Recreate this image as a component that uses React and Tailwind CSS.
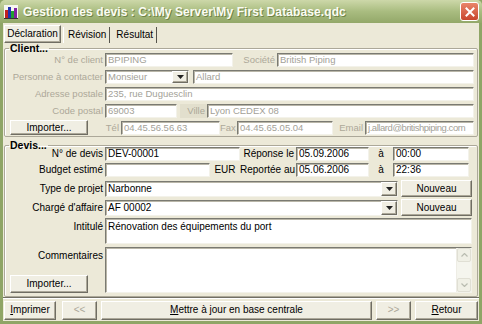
import React from "react";

const sunk =
  "bg-white border border-t-[#7a7a72] border-l-[#7a7a72] border-b-[#f3f2ea] border-r-[#f3f2ea] shadow-[inset_1px_1px_0_#b9b6a8]";
const raised =
  "bg-[#f0eee3] border border-t-white border-l-white border-b-[#6f6d63] border-r-[#6f6d63] shadow-[inset_-1px_-1px_0_#aca899]";

function AppIcon() {
  return (
    <svg width="14" height="14" viewBox="0 0 14 14" className="shrink-0">
      <rect x="0" y="0" width="14" height="14" fill="#f6f6f0" />
      <rect x="1" y="5" width="3" height="8" fill="#c02020" />
      <rect x="4" y="2" width="3" height="11" fill="#2030b0" />
      <rect x="7" y="6" width="3" height="7" fill="#20a030" />
      <rect x="10" y="3" width="3" height="10" fill="#8020a0" />
      <rect x="0" y="13" width="14" height="1" fill="#333" />
    </svg>
  );
}

function ArrowBtn() {
  return (
    <div className={`${raised} w-[16px] h-full flex items-center justify-center shrink-0`}>
      <svg width="7" height="4" viewBox="0 0 7 4">
        <path d="M0 0 H7 L3.5 4 Z" fill="#222" />
      </svg>
    </div>
  );
}

function Input({ w, value, dim, grow, h = "h-[14px]", tight }) {
  return (
    <div
      className={`${sunk} ${h} ${grow ? "flex-1 min-w-0" : "shrink-0"} flex items-center pl-[2px] overflow-hidden whitespace-nowrap leading-none ${
        dim ? "text-[#a3a198] text-[9.5px]" : "text-black text-[10px]"
      } ${tight ? "tracking-[-0.45px]" : ""}`}
      style={w ? { width: w } : undefined}
    >
      {value}
    </div>
  );
}

function Select({ w, value, dim, grow, h = "h-[14px]" }) {
  return (
    <div
      className={`${sunk} ${h} ${grow ? "flex-1 min-w-0" : "shrink-0"} flex items-stretch overflow-hidden whitespace-nowrap leading-none ${
        dim ? "text-[#a3a198] text-[9.5px]" : "text-black text-[10px]"
      }`}
      style={w ? { width: w } : undefined}
    >
      <div className="flex-1 flex items-center pl-[2px]">{value}</div>
      <ArrowBtn />
    </div>
  );
}

function CLabel({ w, children, center }) {
  return (
    <div
      className={`shrink-0 ${center ? "text-center" : "text-right pr-[2px]"} text-[9.5px] text-[#aca899] whitespace-nowrap leading-none`}
      style={{ width: w }}
    >
      {children}
    </div>
  );
}

function DLabel({ w, children, center }) {
  return (
    <div
      className={`shrink-0 ${center ? "text-center" : "text-right pr-[2px]"} text-[10px] text-black whitespace-nowrap leading-none`}
      style={{ width: w }}
    >
      {children}
    </div>
  );
}

function Button({ w, children, disabled, grow, className = "" }) {
  return (
    <div
      className={`${raised} ${grow ? "flex-1 min-w-0" : "shrink-0"} flex items-center justify-center text-[10px] leading-none ${
        disabled ? "text-[#aca899]" : "text-black"
      } ${className}`}
      style={w ? { width: w } : undefined}
    >
      {children}
    </div>
  );
}

export default function App() {
  return (
    <div
      className="w-[482px] h-[324px] flex flex-col overflow-hidden bg-[#8fa566]"
      style={{ fontFamily: '"Liberation Sans", Arial, sans-serif' }}
    >
      {/* title bar */}
      <div className="h-[23px] shrink-0 flex items-center pl-[4px] pr-[3px] bg-gradient-to-b from-[#cdd8a9] via-[#a9bc80] to-[#93a869] rounded-t-[5px]">
        <AppIcon />
        <span className="ml-[5px] text-[12px] font-bold text-[#fbfcf3] tracking-[0.1px] [text-shadow:1px_1px_0_#6f8347] whitespace-nowrap">
          {"Gestion des devis : C:\\My Server\\My First Database.qdc"}
        </span>
        <div className="ml-auto w-[19px] h-[19px] rounded-[3px] border border-white bg-gradient-to-b from-[#e9856a] to-[#c8452c] flex items-center justify-center">
          <svg width="10" height="10" viewBox="0 0 10 10">
            <path d="M1.5 1.5 L8.5 8.5 M8.5 1.5 L1.5 8.5" stroke="white" strokeWidth="2" strokeLinecap="square" />
          </svg>
        </div>
      </div>

      {/* body */}
      <div className="flex-1 mx-[3px] mb-[4px] bg-[#ece9d8] flex flex-col">
        {/* tabs */}
        <div className="h-[20px] shrink-0 flex items-end pl-[1px] text-[10px] leading-none">
          <div className={`${raised} h-[18px] w-[57px] flex items-center justify-center`}>Déclaration</div>
          <div className="h-[16px] ml-[2px] pl-[4px] pr-[3px] flex items-center border-l border-r border-l-white border-r-[#55544c]">Révision</div>
          <div className="h-[16px] ml-[2px] pl-[4px] pr-[3px] flex items-center border-r border-r-[#55544c]">Résultat</div>
        </div>

        {/* client */}
        <fieldset className="mx-[1px] border border-[#aca899] shadow-[inset_1px_1px_0_#fff] rounded-[2px] pb-[1px] pr-[3px] min-w-0">
          <legend className="ml-[4px] px-[1px] text-[10.5px] font-bold leading-[11px]">Client...</legend>
          <div className="flex items-center h-[14px] mt-[-1px]">
            <CLabel w={100}>N° de client</CLabel>
            <Input w={128} value="BPIPING" dim />
            <CLabel w={44}>Société</CLabel>
            <Input grow value="British Piping" dim />
          </div>
          <div className="flex items-center h-[14px] mt-[3px]">
            <CLabel w={100}>Personne à contacter</CLabel>
            <Select w={84} value="Monsieur" dim />
            <div className="w-[4px]" />
            <Input grow value="Allard" dim />
          </div>
          <div className="flex items-center h-[14px] mt-[3px]">
            <CLabel w={100}>Adresse postale</CLabel>
            <Input grow value="235, rue Duguesclin" dim />
          </div>
          <div className="flex items-center h-[14px] mt-[3px]">
            <CLabel w={100}>Code postal</CLabel>
            <Input w={72} value="69003" dim />
            <div className="ml-[3px] w-[27px] h-[14px] bg-[#e2dfcd] flex items-center justify-end pr-[2px] text-[9.5px] text-[#aca899] leading-none">Ville</div>
            <Input grow value="Lyon CEDEX 08" dim />
          </div>
          <div className="flex items-center h-[15px] mt-[2px]">
            <Button w={78} className="ml-[5px] h-[15px]">Importer...</Button>
            <CLabel w={33}>Tél</CLabel>
            <Input w={99} value="04.45.56.56.63" dim />
            <CLabel w={17}>Fax</CLabel>
            <Input w={96} value="04.45.65.05.04" dim />
            <CLabel w={32}>Email</CLabel>
            <Input grow value="j.allard@britishpiping.com" dim tight />
          </div>
        </fieldset>

        {/* devis */}
        <fieldset className="mx-[1px] mt-[3px] border border-[#aca899] shadow-[inset_1px_1px_0_#fff] rounded-[2px] pb-[3px] pr-[5px] min-w-0">
          <legend className="ml-[4px] px-[1px] text-[10.5px] font-bold leading-[11px]">Devis...</legend>
          <div className="flex items-center h-[14px] mt-[-4px]">
            <DLabel w={100}>N° de devis</DLabel>
            <Input w={135} value="DEV-00001" />
            <DLabel w={56}>Réponse le</DLabel>
            <Input w={73} value="05.09.2006" />
            <DLabel w={24} center>à</DLabel>
            <Input w={76} value="00:00" />
          </div>
          <div className="flex items-center h-[14px] mt-[2px]">
            <DLabel w={100}>Budget estimé</DLabel>
            <Input w={105} value="" />
            <DLabel w={30} center>EUR</DLabel>
            <DLabel w={56}>Reportée au</DLabel>
            <Input w={73} value="05.06.2006" />
            <DLabel w={24} center>à</DLabel>
            <Input w={76} value="22:36" />
          </div>
          <div className="flex items-center h-[17px] mt-[3px]">
            <DLabel w={100}>Type de projet</DLabel>
            <Select grow h="h-[16px]" value="Narbonne" />
            <Button w={71} className="ml-[3px] h-[17px]">Nouveau</Button>
          </div>
          <div className="flex items-center h-[17px] mt-[2px]">
            <DLabel w={100}>Chargé d'affaire</DLabel>
            <Select grow h="h-[16px]" value="AF 00002" />
            <Button w={71} className="ml-[3px] h-[17px]">Nouveau</Button>
          </div>
          <div className="flex items-start h-[26px] mt-[2px]">
            <DLabel w={100}>
              <div className="pt-[4px]">Intitulé</div>
            </DLabel>
            <div className={`${sunk} flex-1 h-[26px] pl-[2px] pt-[3px] text-[10px] leading-none`}>
              Rénovation des équipements du port
            </div>
          </div>
          <div className="flex items-stretch h-[46px] mt-[3px]">
            <div className="w-[100px] shrink-0 flex flex-col">
              <div className="text-right pr-[2px] text-[10px] leading-none pt-[4px]">Commentaires</div>
              <Button w={78} className="ml-[5px] mt-auto h-[18px]">Importer...</Button>
            </div>
            <div className={`${sunk} flex-1 flex justify-end`}>
              <div className="w-[15px] flex flex-col justify-between bg-[#f5f5ee] border-l border-[#eeede5]">
                <div className="h-[14px] bg-[#f0f0e6] border border-[#e0dfd4] rounded-[2px] flex items-center justify-center">
                  <svg width="7" height="4" viewBox="0 0 7 4">
                    <path d="M0.5 3.5 L3.5 0.5 L6.5 3.5" stroke="#b9bcb0" strokeWidth="1.2" fill="none" />
                  </svg>
                </div>
                <div className="h-[14px] bg-[#f0f0e6] border border-[#e0dfd4] rounded-[2px] flex items-center justify-center">
                  <svg width="7" height="4" viewBox="0 0 7 4">
                    <path d="M0.5 0.5 L3.5 3.5 L6.5 0.5" stroke="#b9bcb0" strokeWidth="1.2" fill="none" />
                  </svg>
                </div>
              </div>
            </div>
          </div>
        </fieldset>

        {/* bottom bar */}
        <div className="mt-auto h-[24px] shrink-0 border-t border-t-[#716f64] shadow-[inset_0_1px_0_#fff] flex items-center gap-[4px] px-[1px] pt-[1px]">
          <Button w={52} className="h-[19px]">
            <span><u>I</u>mprimer</span>
          </Button>
          <Button w={35} disabled className="h-[19px] ml-[2px]">&lt;&lt;</Button>
          <Button grow className="h-[19px]">
            <span><u>M</u>ettre à jour en base centrale</span>
          </Button>
          <Button w={35} disabled className="h-[19px]">&gt;&gt;</Button>
          <Button w={63} className="h-[19px]">
            <span><u>R</u>etour</span>
          </Button>
        </div>
      </div>
    </div>
  );
}
